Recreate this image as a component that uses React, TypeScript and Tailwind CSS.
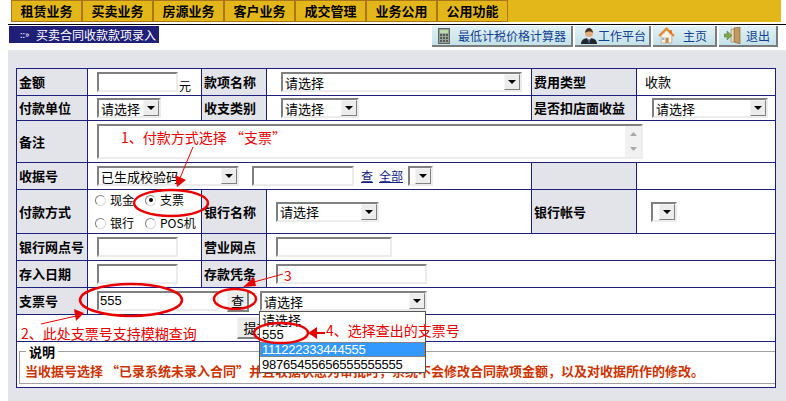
import type { ReactNode } from "react";

const CJK = "font-['Noto_Sans_CJK_SC','Liberation_Sans',sans-serif]";
const LINE = "border border-[#1f1f7f]";
const LABEL = `${LINE} bg-[#e3e4ea] pl-[2px] text-[13px] font-bold text-black whitespace-nowrap`;
const INSET = "border-2 border-t-[#808080] border-l-[#808080] border-r-[#ececec] border-b-[#ececec] bg-white";

const NAV = ["租赁业务", "买卖业务", "房源业务", "客户业务", "成交管理", "业务公用", "公用功能"];

function Field({ className }: { className: string }) {
  return <div className={`${INSET} h-[20px] ${className}`} />;
}

function Select({ text, className }: { text?: string; className: string }) {
  return (
    <div className={`${INSET} flex h-[20px] items-center justify-between ${className}`}>
      <span className="pl-[2px] text-[13px] leading-none text-black whitespace-nowrap">{text}</span>
      <span className="flex h-[16px] w-[16px] shrink-0 items-center justify-center border border-r-[#808080] border-b-[#808080] border-t-[#f5f5f5] border-l-[#f5f5f5] bg-[#ececec]">
        <svg width="8" height="4" viewBox="0 0 8 4">
          <path d="M0 0h8L4 4z" fill="#000" />
        </svg>
      </span>
    </div>
  );
}

function Radio({ on }: { on?: boolean }) {
  return (
    <span className="flex h-[11px] w-[11px] items-center justify-center rounded-full border border-t-[#808080] border-l-[#808080] border-r-[#d8d8d8] border-b-[#d8d8d8] bg-white">
      {on && <span className="h-[4px] w-[4px] rounded-full bg-black" />}
    </span>
  );
}

function ToolButton({ icon, label, className }: { icon: ReactNode; label: string; className: string }) {
  return (
    <div className={`flex h-[21px] items-center border-r-2 border-b-2 border-[#7c7c7c] bg-gradient-to-b from-[#e2f1f5] to-[#c4e2e9] text-[12px] text-[#11408f] ${className}`}>
      {icon}
      <span className="whitespace-nowrap">{label}</span>
    </div>
  );
}

function Cell({ children, span, className = "" }: { children?: ReactNode; span?: number; className?: string }) {
  return (
    <td colSpan={span} className={`${LINE} ${className}`}>
      {children}
    </td>
  );
}

function Label({ children }: { children?: ReactNode }) {
  return <td className={LABEL}>{children}</td>;
}

function Overlay() {
  return (
    <svg className="pointer-events-none absolute top-0 left-0" width="786" height="401" fill="none">
      <g stroke="#e80000" strokeWidth="2.5">
        <ellipse cx="171" cy="203" rx="37" ry="13" />
        <ellipse cx="131" cy="300" rx="51" ry="16" />
        <ellipse cx="235" cy="299" rx="21" ry="10" />
        <ellipse cx="281" cy="333" rx="27" ry="10" />
      </g>
      <g stroke="#e80000" strokeWidth="1">
        <path d="M193 147L180 178" />
        <path d="M41 324L76 316" />
        <path d="M283 274L254 282" />
        <path d="M316 333H325" strokeWidth="2" />
      </g>
      <g fill="#e80000">
        <path d="M177 187L175 175L186 180z" />
        <path d="M84 313L74 309L76 321z" />
        <path d="M243 287L254 277L256 286z" />
        <path d="M308 333L317 327V339z" />
      </g>
    </svg>
  );
}

function Note({ text, className }: { text: string; className: string }) {
  return <span className={`absolute text-[14px] leading-none whitespace-nowrap text-[#e80000] ${className}`}>{text}</span>;
}

export default function App() {
  return (
    <div className={`relative h-[401px] w-[786px] overflow-hidden bg-white ${CJK}`}>
      <div className="pr-[5px] pl-[11px]">
        <div className="flex h-[22px] bg-[#e3b71a]">
          {NAV.map((item) => (
            <div key={item} className="flex h-full w-[71px] items-center justify-center border border-[#a9761a] text-[13px] font-bold text-black">
              {item}
            </div>
          ))}
        </div>
      </div>
      <div className="mt-[2px] ml-[8px] h-[1px] bg-black" />
      <div className="flex h-[25px] justify-between pt-[1px] pr-[8px] pl-[9px]">
        <div className="flex h-[17px] w-[150px] items-center bg-[#1f1f77] pl-[11px] text-[12px] text-white">
          <span className="w-[16px] text-[9px] leading-none">::»</span>
          <span className="whitespace-nowrap">买卖合同收款款项录入</span>
        </div>
        <div className="flex gap-[2px]">
          <ToolButton
            className="w-[141px] gap-[8px] pl-[6px]"
            label="最低计税价格计算器"
            icon={
              <svg width="12" height="16" viewBox="0 0 12 16">
                <rect x="0.5" y="0.5" width="11" height="15" fill="#9aa39a" stroke="#5f665f" />
                <rect x="2" y="2" width="8" height="3" fill="#b9dca8" />
                <path d="M2 7h2M5 7h2M8 7h2M2 10h2M5 10h2M8 10h2M2 13h2M5 13h2M8 13h2" stroke="#3c423c" strokeWidth="1.5" />
              </svg>
            }
          />
          <ToolButton
            className="w-[76px] gap-[1px] pl-[6px]"
            label="工作平台"
            icon={
              <svg width="16" height="16" viewBox="0 0 16 16">
                <path d="M0 16c0-4 3-6 8-6s8 2 8 6z" fill="#24262c" />
                <path d="M6 10h4l-2 4z" fill="#dfe8ef" />
                <path d="M7.500 11h1l.5 4h-2z" fill="#2553a8" />
                <circle cx="8" cy="5" r="4" fill="#e3ab7c" />
                <path d="M4 5c0-3 2-5 4-5s4 2 4 5c-1-2-6-2-8 0z" fill="#4b3320" />
              </svg>
            }
          />
          <ToolButton
            className="w-[64px] gap-[8px] pl-[5px]"
            label="主页"
            icon={
              <svg width="17" height="17" viewBox="0 0 16 16">
                <path d="M3 8v7h10V8L8 3z" fill="#f5f3ea" stroke="#b89a68" strokeWidth="0.6" />
                <path d="M1 8.500L8 1.500l7 7" stroke="#e58a28" strokeWidth="2" fill="none" />
                <rect x="7" y="10" width="3" height="5" fill="#c98a50" />
                <rect x="4" y="10" width="2" height="2" fill="#7aa6cf" />
                <rect x="11" y="3" width="2" height="3" fill="#d86f28" />
              </svg>
            }
          />
          <ToolButton
            className="w-[59px] gap-[5px] pl-[5px]"
            label="退出"
            icon={
              <svg width="17" height="17" viewBox="0 0 17 17">
                <path d="M10 1l6-1v17l-6-2z" fill="#c29a5e" stroke="#7d5d2e" strokeWidth="0.6" />
                <rect x="7" y="2" width="3" height="13" fill="#e8d9b8" stroke="#8a7448" strokeWidth="0.5" />
                <path d="M0 7h3V4l5 4.500-5 4.500v-3H0z" fill="#7ea84e" stroke="#55783a" strokeWidth="0.5" />
              </svg>
            }
          />
        </div>
      </div>

      <div className="ml-[8px] h-[351px] bg-[#e3e4ea] pt-[18px] pl-[8px]">
        <table className="w-[759px] table-fixed border-collapse bg-white text-[13px] text-black">
          <colgroup>
            <col className="w-[71px]" />
            <col className="w-[114px]" />
            <col className="w-[65px]" />
            <col className="w-[265px]" />
            <col className="w-[105px]" />
            <col className="w-[139px]" />
          </colgroup>
          <tbody>
            <tr className="h-[27px]">
              <Label>金额</Label>
              <Cell className="pl-[9px]">
                <div className="flex items-end">
                  <Field className="w-[81px]" />
                  <span className="pl-[1px] text-[12px] leading-none">元</span>
                </div>
              </Cell>
              <Label>款项名称</Label>
              <Cell className="pl-[14px]">
                <Select text="请选择" className="w-[241px]" />
              </Cell>
              <Label>费用类型</Label>
              <Cell className="pl-[8px]">收款</Cell>
            </tr>
            <tr className="h-[25px]">
              <Label>付款单位</Label>
              <Cell className="pl-[9px]">
                <Select text="请选择" className="w-[64px]" />
              </Cell>
              <Label>收支类别</Label>
              <Cell className="pl-[14px]">
                <Select text="请选择" className="w-[78px]" />
              </Cell>
              <Label>是否扣店面收益</Label>
              <Cell className="pl-[15px]">
                <Select text="请选择" className="w-[116px]" />
              </Cell>
            </tr>
            <tr className="h-[42px]">
              <Label>备注</Label>
              <Cell span={5} className="pl-[9px]">
                <div className={`${INSET} flex h-[35px] w-[546px] justify-end`}>
                  <div className="flex w-[16px] flex-col items-center justify-between bg-[#f1f1f1] py-[6px]">
                    <svg width="7" height="4" viewBox="0 0 7 4">
                      <path d="M3.500 0L7 4H0z" fill="#a8a8a8" />
                    </svg>
                    <svg width="7" height="4" viewBox="0 0 7 4">
                      <path d="M0 0h7L3.500 4z" fill="#a8a8a8" />
                    </svg>
                  </div>
                </div>
              </Cell>
            </tr>
            <tr className="h-[27px]">
              <Label>收据号</Label>
              <Cell span={3} className="pl-[9px]">
                <div className="flex items-center">
                  <Select text="已生成校验码" className="w-[142px]" />
                  <Field className="ml-[13px] w-[102px]" />
                  <span className="ml-[7px] text-[12px] text-[#11237f] underline">查</span>
                  <span className="ml-[6px] text-[12px] text-[#11237f] underline">全部</span>
                  <Select className="ml-[5px] w-[25px]" />
                </div>
              </Cell>
              <Label />
              <Cell />
            </tr>
            <tr className="h-[44px]">
              <Label>付款方式</Label>
              <Cell className="pl-[7px] text-[12px]">
                <div className="grid grid-cols-[50px_60px] gap-y-[5px]">
                  <div className="flex items-center gap-[4px]"><Radio />现金</div>
                  <div className="flex items-center gap-[4px]"><Radio on />支票</div>
                  <div className="flex items-center gap-[4px]"><Radio />银行</div>
                  <div className="flex items-center gap-[4px]"><Radio />POS机</div>
                </div>
              </Cell>
              <Label>银行名称</Label>
              <Cell className="pl-[9px]">
                <Select text="请选择" className="w-[103px]" />
              </Cell>
              <Label>银行帐号</Label>
              <Cell className="pl-[14px]">
                <Select className="w-[26px]" />
              </Cell>
            </tr>
            <tr className="h-[27px]">
              <Label>银行网点号</Label>
              <Cell className="pl-[9px]">
                <Field className="w-[81px]" />
              </Cell>
              <Label>营业网点</Label>
              <Cell span={3} className="pl-[9px]">
                <Field className="w-[116px]" />
              </Cell>
            </tr>
            <tr className="h-[27px]">
              <Label>存入日期</Label>
              <Cell className="pl-[9px]">
                <Field className="w-[81px]" />
              </Cell>
              <Label>存款凭条</Label>
              <Cell span={3} className="pl-[9px]">
                <Field className="w-[151px]" />
              </Cell>
            </tr>
            <tr className="h-[27px]">
              <Label>支票号</Label>
              <Cell span={5} className="pl-[9px]">
                <div className="flex items-center">
                  <div className={`${INSET} flex h-[20px] w-[122px] items-center pl-[1px] text-[13px] font-['Liberation_Sans',sans-serif]`}>555</div>
                  <div className="ml-[8px] flex h-[21px] w-[22px] items-center justify-center border border-r-2 border-b-2 border-t-[#f5f5f5] border-l-[#f5f5f5] border-r-[#808080] border-b-[#808080] bg-[#ececec] text-[13px]">
                    查
                  </div>
                  <Select text="请选择" className="ml-[11px] w-[167px]" />
                </div>
              </Cell>
            </tr>
            <tr className="h-[27px]">
              <Cell span={6} className="pl-[220px]">
                <div className="flex h-[22px] w-[40px] items-center justify-center border border-r-2 border-b-2 border-t-[#f5f5f5] border-l-[#f5f5f5] border-r-[#808080] border-b-[#808080] bg-[#ececec] text-[13px]">
                  提交
                </div>
              </Cell>
            </tr>
            <tr className="h-[46px]">
              <Cell span={6} className="pl-[2px]">
                <fieldset className="h-[39px] border border-r-0 border-[#a0a0a0] pl-[5px]">
                  <legend className="ml-[1px] px-[3px] text-[13px] leading-[13px] font-bold">说明</legend>
                  <div className="mt-[3px] text-[13px] leading-[20px] font-bold whitespace-nowrap text-[#cc3300]">
                    当收据号选择 “已录系统未录入合同”并且收据状态为审批时，系统不会修改合同款项金额，以及对收据所作的修改。
                  </div>
                </fieldset>
              </Cell>
            </tr>
          </tbody>
        </table>
      </div>

      {/* 下拉列表盖在表格上 */}
      <div className="absolute top-[311px] left-[259px] flex h-[62px] w-[167px] flex-col overflow-hidden border border-[#555] bg-white font-['Liberation_Sans',sans-serif] text-[13px] text-black">
        <div className={`${CJK} h-[16px] pl-[2px] text-[13px] leading-[15px]`}>请选择</div>
        <div className="h-[15px] pl-[2px] leading-[15px]">555</div>
        <div className="h-[15px] border border-dotted border-[#d07020] bg-[#3399ff] pl-[1px] leading-[13px] tracking-[-0.2px] text-white">111222333444555</div>
        <div className="h-[15px] pl-[2px] leading-[15px] tracking-[-0.2px]">98765455656555555555</div>
      </div>

      <Overlay />
      <Note text="1、付款方式选择 “支票”" className="top-[130px] left-[121px]" />
      <Note text="2、此处支票号支持模糊查询" className="top-[326px] left-[21px]" />
      <Note text="3" className="top-[268px] left-[284px]" />
      <Note text="4、选择查出的支票号" className="top-[323px] left-[326px]" />
    </div>
  );
}
